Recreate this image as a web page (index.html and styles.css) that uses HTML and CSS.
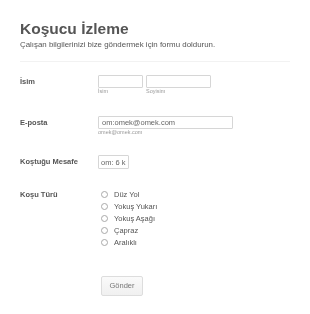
FILE: index.html
```html
<!DOCTYPE html>
<html lang="tr">
<head>
    <meta charset="UTF-8">
    <meta name="viewport" content="width=device-width, initial-scale=1.0">
    <title>Koşucu İzleme</title>
    <link rel="stylesheet" href="styles.css">
</head>
<body>
    <form class="form">
        <div class="header">
            <h1 class="title">Koşucu İzleme</h1>
            <p class="subtitle">Çalışan bilgilerinizi bize göndermek için formu doldurun.</p>
        </div>

        <div class="row row-name">
            <label class="label">İsim</label>
            <div class="field pair">
                <span class="sub">
                    <input type="text" class="input input-first">
                    <small>İsim</small>
                </span>
                <span class="sub">
                    <input type="text" class="input input-last">
                    <small>Soyisim</small>
                </span>
            </div>
        </div>

        <div class="row row-mail">
            <label class="label">E-posta</label>
            <div class="field">
                <input type="text" class="input input-mail" placeholder="om:omek@omek.com">
                <small>omek@omek.com</small>
            </div>
        </div>

        <div class="row row-dist">
            <label class="label">Koştuğu Mesafe</label>
            <div class="field">
                <input type="text" class="input input-dist" placeholder="om: 6 km">
            </div>
        </div>

        <div class="row row-type">
            <label class="label">Koşu Türü</label>
            <div class="field radios">
                <label class="radio"><input type="radio" name="tur"><span>Düz Yol</span></label>
                <label class="radio"><input type="radio" name="tur"><span>Yokuş Yukarı</span></label>
                <label class="radio"><input type="radio" name="tur"><span>Yokuş Aşağı</span></label>
                <label class="radio"><input type="radio" name="tur"><span>Çapraz</span></label>
                <label class="radio"><input type="radio" name="tur"><span>Aralıklı</span></label>
            </div>
        </div>

        <div class="actions">
            <button type="button" class="button">Gönder</button>
        </div>
    </form>
</body>
</html>
```

FILE: styles.css
```css
body {
    margin: 0;
    background: #ffffff;
    font-family: 'Liberation Sans', Arial, sans-serif;
    color: #555555;
    -webkit-font-smoothing: antialiased;
}

/* keeps small text in grey antialiasing */
.form {
    width: 270px;
    padding: 20px 0 0 20px;
    will-change: transform;
}

.header {
    border-bottom: 1px solid #f2f2f2;
    padding-bottom: 11px;
}

.title {
    margin: 0;
    font-size: 15.5px;
    font-weight: bold;
    line-height: 18px;
    color: #555555;
}

.subtitle {
    margin: 2px 0 0;
    font-size: 7.9px;
    line-height: 10px;
}

.row {
    display: flex;
}

.label {
    width: 78px;
    flex-shrink: 0;
    font-size: 7.5px;
    font-weight: bold;
    line-height: 12px;
    padding-top: 1px;
}

.field small {
    display: block;
    font-size: 5.5px;
    line-height: 7px;
    color: #9a9a9a;
}

.pair {
    display: flex;
    gap: 3px;
}

.input {
    box-sizing: border-box;
    display: block;
    height: 13px;
    margin: 0;
    padding: 0 3px;
    border: 1px solid #d6d6d6;
    border-radius: 1px;
    font-family: 'Liberation Sans', Arial, sans-serif;
    font-size: 7.5px;
    color: #555555;
    background: #ffffff;
}

.input::placeholder {
    color: #666666;
}

.row-name {
    margin-top: 13px;
}

.input-first {
    width: 45px;
}

.input-last {
    width: 65px;
}

.row-mail {
    margin-top: 21px;
}

.input-mail {
    width: 135px;
}

.row-dist {
    margin-top: 19px;
}

.input-dist {
    width: 31px;
    height: 14px;
    padding: 0 2px;
}

.row-type {
    margin-top: 19px;
}

.radios {
    display: flex;
    flex-direction: column;
    padding-left: 3px;
}

.radio {
    display: flex;
    align-items: center;
    height: 12px;
    font-size: 7.5px;
}

.radio input {
    appearance: none;
    width: 7px;
    height: 7px;
    margin: 0 6px 0 0;
    border: 1px solid #a8a8a8;
    border-radius: 50%;
    background: #ffffff;
}

.actions {
    padding: 26px 0 0 81px;
}

.button {
    width: 42px;
    height: 20px;
    padding: 0;
    border: 1px solid #dddddd;
    border-radius: 2px;
    background: linear-gradient(#fafafa, #f0f0f0);
    font-family: 'Liberation Sans', Arial, sans-serif;
    font-size: 7.5px;
    color: #777777;
    cursor: pointer;
}
```
